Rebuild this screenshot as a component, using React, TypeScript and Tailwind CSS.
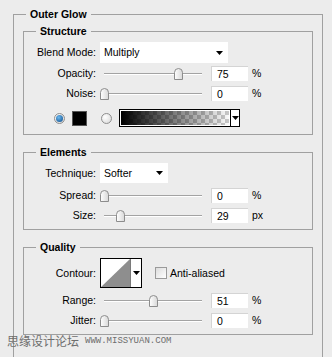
import React from "react"

function Group({ title, className = "", children }: { title: string; className?: string; children: React.ReactNode }) {
  return (
    <fieldset className={"m-0 min-w-0 border border-[#a0a0a0] p-0 " + className}>
      <legend className="ml-[12px] px-[4px] text-[10.5px] font-bold leading-[13px] text-black">{title}</legend>
      {children}
    </fieldset>
  )
}

function Row({ label, children, className = "" }: { label: string; children: React.ReactNode; className?: string }) {
  return (
    <div className={"flex items-center " + className}>
      <span className="w-[72px] text-right leading-[13px]">{label}</span>
      <div className="ml-[4px] flex h-full items-center">{children}</div>
    </div>
  )
}

function Arrow() {
  return (
    <svg width="7" height="4" viewBox="0 0 7 4">
      <path d="M0 0h7L3.5 4z" fill="#000" />
    </svg>
  )
}

function Slider({ pos }: { pos: number }) {
  return (
    <div className="relative h-[15px] w-[106px]">
      <div className="absolute left-[4px] right-[4px] top-[7px] h-[2px] border-t border-[#a3a3a3] bg-white" />
      <svg className="absolute top-[2px]" style={{ left: pos * 98 }} width="9" height="12" viewBox="0 0 9 12">
        <defs>
          <linearGradient id="th" x1="0" x2="1" y1="0" y2="0">
            <stop offset="0" stopColor="#ffffff" />
            <stop offset="1" stopColor="#d8d8d8" />
          </linearGradient>
        </defs>
        <path d="M0.5 4.5Q0.5 0.5 4.5 0.5Q8.5 0.5 8.5 4.5V11.5H0.5Z" fill="url(#th)" stroke="#8c8c8c" />
      </svg>
    </div>
  )
}

function Field({ value, unit }: { value: string; unit: string }) {
  return (
    <div className="ml-[5px] flex items-center">
      <div className="flex h-[15px] w-[37px] items-center border-t border-l border-[#d4d4d4] bg-white pl-[5px] leading-[13px]">{value}</div>
      <span className="ml-[4px] leading-[13px]">{unit}</span>
    </div>
  )
}

function Select({ value, width }: { value: string; width: string }) {
  return (
    <div className={"flex h-full items-center justify-between bg-white pl-[4px] pr-[5px] " + width}>
      <span className="leading-[13px]">{value}</span>
      <Arrow />
    </div>
  )
}

function Radio({ on }: { on: boolean }) {
  return (
    <span className="flex h-[11px] w-[11px] items-center justify-center rounded-full border border-[#8e8e8e] bg-[radial-gradient(circle_at_35%_35%,#ffffff,#d4d4d4)]">
      {on && <span className="h-[7px] w-[7px] rounded-full bg-[radial-gradient(circle_at_40%_35%,#6ab8f0,#0d4a86)]" />}
    </span>
  )
}

export default function App() {
  return (
    <div className="relative h-[357px] w-[332px] overflow-hidden bg-[#ececec] pl-[13px] pr-[9px] pt-[8px] font-['Liberation_Sans',Arial,sans-serif] text-[10.5px] text-black">
      <Group title="Outer Glow" className="h-[400px]">
        <div className="px-[9px] pt-[4px]">
          <Group title="Structure">
            <div className="flex flex-col pb-[7px] pt-[4px]">
              <Row label="Blend Mode:" className="h-[21px]">
                <Select value="Multiply" width="w-[128px]" />
              </Row>
              <Row label="Opacity:" className="mt-[3px] h-[15px]">
                <Slider pos={0.75} />
                <Field value="75" unit="%" />
              </Row>
              <Row label="Noise:" className="mt-[5px] h-[15px]">
                <Slider pos={0} />
                <Field value="0" unit="%" />
              </Row>
              <div className="mt-[8px] flex h-[18px] items-center pl-[30px]">
                <Radio on />
                <span className="ml-[7px] h-[15px] w-[15px] border border-[#555] bg-black" />
                <span className="ml-[14px]">
                  <Radio on={false} />
                </span>
                <div className="ml-[7px] flex h-[18px] w-[121px] border border-black bg-white">
                  <svg width="110" height="16" className="border border-white">
                    <defs>
                      <pattern id="ck" width="8" height="8" patternUnits="userSpaceOnUse">
                        <rect width="8" height="8" fill="#ffffff" />
                        <rect width="4" height="4" fill="#cccccc" />
                        <rect x="4" y="4" width="4" height="4" fill="#cccccc" />
                      </pattern>
                      <linearGradient id="gr" x1="0" x2="1" y1="0" y2="0">
                        <stop offset="0" stopColor="#000" stopOpacity="1" />
                        <stop offset="1" stopColor="#000" stopOpacity="0" />
                      </linearGradient>
                    </defs>
                    <rect width="110" height="16" fill="url(#ck)" />
                    <rect width="110" height="16" fill="url(#gr)" />
                  </svg>
                  <div className="flex flex-1 items-center justify-center border-l border-black">
                    <Arrow />
                  </div>
                </div>
              </div>
            </div>
          </Group>

          <Group title="Elements" className="mt-[11px]">
            <div className="flex flex-col pb-[6px] pt-[4px]">
              <Row label="Technique:" className="h-[20px]">
                <Select value="Softer" width="w-[68px]" />
              </Row>
              <Row label="Spread:" className="mt-[5px] h-[15px]">
                <Slider pos={0} />
                <Field value="0" unit="%" />
              </Row>
              <Row label="Size:" className="mt-[5px] h-[15px]">
                <Slider pos={0.168} />
                <Field value="29" unit="px" />
              </Row>
            </div>
          </Group>

          <Group title="Quality" className="mt-[11px]">
            <div className="flex flex-col pb-[6px] pt-[4px]">
              <Row label="Contour:" className="h-[30px]">
                <div className="flex h-[30px] w-[42px] border border-black bg-white">
                  <svg width="29" height="28" viewBox="0 0 29 28">
                    <rect width="29" height="28" fill="#fff" />
                    <path d="M0 28L29 0V28Z" fill="#8e8e8e" />
                  </svg>
                  <div className="flex flex-1 items-center justify-center border-l border-[#7a7a7a]">
                    <Arrow />
                  </div>
                </div>
                <span className="ml-[13px] h-[12px] w-[12px] border border-[#9a9a9a] bg-[linear-gradient(135deg,#dcdcdc,#ffffff)]" />
                <span className="ml-[3px] leading-[13px]">Anti-aliased</span>
              </Row>
              <Row label="Range:" className="mt-[5px] h-[15px]">
                <Slider pos={0.5} />
                <Field value="51" unit="%" />
              </Row>
              <Row label="Jitter:" className="mt-[5px] h-[15px]">
                <Slider pos={0} />
                <Field value="0" unit="%" />
              </Row>
            </div>
          </Group>
        </div>
      </Group>

      <div className="absolute left-[7px] top-[334px] flex items-center text-[#6e6e6e]">
        <span className="font-['Noto_Sans_CJK_SC',sans-serif] text-[12px] leading-[14px]">思缘设计论坛</span>
        <span className="ml-[6px] font-['Liberation_Mono',monospace] text-[9px] leading-[14px]">WWW.MISSYUAN.COM</span>
      </div>
    </div>
  )
}
